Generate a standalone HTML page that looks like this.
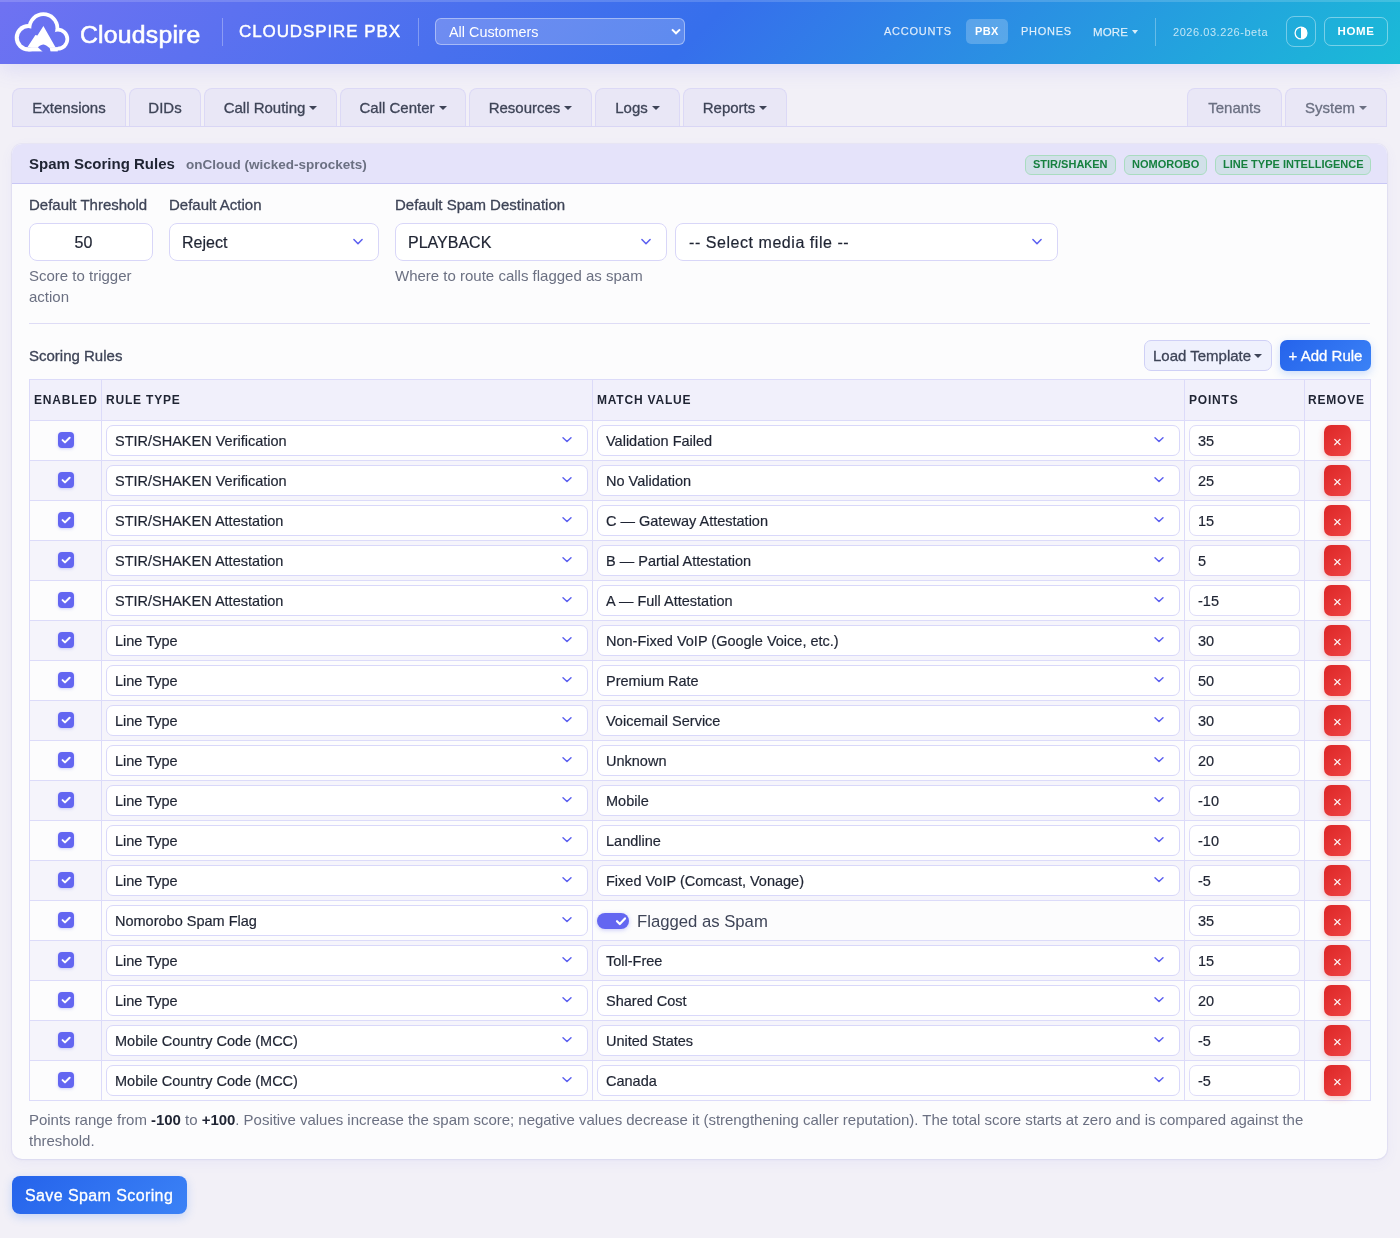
<!DOCTYPE html>
<html><head><meta charset="utf-8">
<style>
*{box-sizing:border-box;margin:0;padding:0}
html,body{width:1400px;height:1238px;overflow:hidden}
body{will-change:transform;background:#f2f0f7;font-family:"Liberation Sans",sans-serif;color:#1f2433;position:relative}
.hdr{position:absolute;left:0;top:0;width:1400px;height:64px;background:linear-gradient(135deg,#6f72f2 0%,#366fec 50%,#1abbd7 100%);box-shadow:0 5px 20px rgba(99,102,241,.15)}
.hdr::before{content:"";position:absolute;left:0;top:0;right:0;height:2px;background:rgba(255,255,255,.16)}
.ab{position:absolute;white-space:nowrap}
.brand{left:80px;top:20.5px;font-size:24.8px;font-weight:400;color:#fff;line-height:28px;-webkit-text-stroke:.55px #fff;letter-spacing:.2px}
.vsep{width:1px;background:rgba(255,255,255,.3)}
.pbx{left:239px;top:22px;font-size:17px;font-weight:400;color:#fff;letter-spacing:.9px;line-height:20px;-webkit-text-stroke:.45px #fff}
.cust{left:435px;top:18px;width:250px;height:27px;border:1px solid rgba(255,255,255,.4);border-radius:6px;background:rgba(255,255,255,.2);color:#fff;font-size:14.4px;line-height:27px;padding-left:13px}
.nav{font-size:11px;color:rgba(255,255,255,.82);letter-spacing:.75px;line-height:14px;-webkit-text-stroke:.25px rgba(255,255,255,.6)}
.tabs .tab{position:absolute;top:88px;height:38px;border:1px solid #dcd9f6;border-bottom:none;border-radius:8px 8px 0 0;background:#e9e7f6;font-size:15px;color:#3e4457;line-height:37px;text-align:center;white-space:nowrap;-webkit-text-stroke:.3px currentColor}
.caret{display:inline-block;width:0;height:0;border-left:4px solid transparent;border-right:4px solid transparent;border-top:4px solid currentColor;vertical-align:middle;margin-left:4px;position:relative;top:-1px}
.card{position:absolute;left:12px;top:144px;width:1375px;height:1015px;background:#fcfcfd;border-radius:10px;box-shadow:0 0 0 1px rgba(120,110,230,.07),0 1px 3px rgba(60,60,120,.05),0 4px 14px rgba(99,102,241,.06);overflow:hidden}
.chd{position:absolute;left:0;top:0;width:100%;height:40px;background:#e5e3fa;border-bottom:1px solid #c9c7f5}
.badge{position:absolute;top:11px;height:20px;border:1px solid #a9dcc0;border-radius:6px;background:#d1e0e9;color:#16803f;font-size:11px;font-weight:700;line-height:17px;padding:0 7px;white-space:nowrap}
.lbl{font-size:15px;color:#3e4457;line-height:18px;-webkit-text-stroke:.3px #3e4457}
.inp{position:absolute;height:38px;border:1px solid #d8d6f8;border-radius:8px;background:#fff;font-size:16px;color:#1f2433;line-height:38px;white-space:nowrap;-webkit-text-stroke:.2px #1f2433}
.help{font-size:15px;color:#6b7082;line-height:21px}
.chev{position:absolute;width:10px;height:6px}

.sr{left:17px;top:203px;font-size:15px;color:#3e4457;line-height:18px;-webkit-text-stroke:.3px #3e4457}
.btnlt{position:absolute;left:1132px;top:196px;width:128px;height:31px;border:1px solid #cfd0f6;border-radius:7px;background:#eff1fd;color:#3e4457;font-size:15px;line-height:29px;padding-left:8px;white-space:nowrap;-webkit-text-stroke:.3px #3e4457}
.btnar{position:absolute;left:1268px;top:196px;width:91px;height:31px;border-radius:7px;background:linear-gradient(135deg,#2563eb,#3b82f6);color:#fff;font-size:15px;line-height:31px;text-align:center;white-space:nowrap;box-shadow:0 3px 8px rgba(59,130,246,.25);-webkit-text-stroke:.3px #fff}
.tbl{position:absolute;left:17px;top:235px;width:1342px;height:722px;border:1px solid #dcdbf9;background:#fcfcfd}
.th{position:absolute;left:0;top:0;width:100%;height:41px;background:#f1f0fb;border-bottom:1px solid #dcdbf9}
.th div{position:absolute;top:12px;font-size:12px;font-weight:700;color:#1f2433;letter-spacing:.8px;line-height:16px}
.vl{position:absolute;top:0;bottom:0;width:1px;background:#dcdbf9}
.rows{position:absolute;left:0;top:41px;width:100%}
.tr{position:relative;height:40px;border-bottom:1px solid #dcdbf9}
.tr.even{background:#f5f4fb}
.tr:last-child{border-bottom:none}
.c{position:absolute;top:0;height:39px}
.cb{position:absolute;left:28px;top:11px;width:16px;height:16px;border-radius:4px;background:#6366f1;box-shadow:0 1px 3px rgba(99,102,241,.3)}
.cb svg{position:absolute;left:3px;top:4px}
.sel{position:absolute;top:4px;height:31px;border:1px solid #d9d8fa;border-radius:7px;background:#fff;font-size:14.5px;color:#1f2433;line-height:30px;padding-left:8px;white-space:nowrap;-webkit-text-stroke:.2px #1f2433}
.c2 .sel{left:4px;width:482px}
.c3 .sel{left:4px;width:583px}
.ch{position:absolute;right:14px;top:9px}
.pts{position:absolute;left:4px;top:4px;width:111px;height:31px;border:1px solid #dedcf9;border-radius:7px;background:#fff;font-size:14.5px;color:#1f2433;line-height:30px;padding-left:8px;-webkit-text-stroke:.2px #1f2433}
.rm{position:absolute;left:19px;top:4px;width:27px;height:31px;border-radius:7px;background:linear-gradient(135deg,#dc2626,#ef4444);color:#fff;font-size:15px;font-weight:400;line-height:34px;text-align:center;box-shadow:0 2px 6px rgba(220,38,38,.28)}
.c1{left:0;width:71px}.c2{left:72px;width:490px}.c3{left:563px;width:591px}.c4{left:1155px;width:119px}.c5{left:1275px;width:65px}
.tog{position:absolute;left:4px;top:12px;width:32px;height:16px;border-radius:8px;background:#6366f1;box-shadow:0 1px 4px rgba(99,102,241,.35)}
.tog svg{position:absolute;left:18px;top:3px}
.togl{position:absolute;left:44px;top:11px;font-size:16.7px;color:#3e4457;line-height:20px;white-space:nowrap}
.foot{left:17px;top:965px;font-size:15px;letter-spacing:-.03px;color:#6b7082;line-height:21px;white-space:normal;width:1330px}
.foot b{color:#1f2433}
.save{position:absolute;left:12px;top:1176px;width:175px;height:38px;border-radius:8px;background:linear-gradient(135deg,#2563eb,#3b82f6);color:#fff;font-size:16px;letter-spacing:.4px;line-height:40px;-webkit-text-stroke:.3px #fff;padding-left:13px;white-space:nowrap;box-shadow:0 3px 10px rgba(59,130,246,.25)}

.ch2{position:absolute;right:14px;top:13px}
</style></head><body>
<div class="hdr">
  <svg class="ab" style="left:10px;top:8px" width="64" height="48" viewBox="0 0 64 48">
    <defs><mask id="cm">
      <g fill="#fff">
        <circle cx="18.4" cy="29.7" r="13.7"/><circle cx="33.4" cy="20.2" r="15.9"/><circle cx="47.8" cy="31.1" r="11.4"/><rect x="18.4" y="29" width="29.4" height="14.4"/>
      </g>
      <g fill="#000">
        <circle cx="18.4" cy="29.7" r="9.6"/><circle cx="33.4" cy="20.2" r="12.1"/><circle cx="47.8" cy="31.1" r="7.7"/><rect x="18.4" y="25" width="29.4" height="14.1"/>
      </g>
      <polygon fill="#fff" points="17.4,39.3 25.4,27 27.4,27.6 33.4,18.1 45.5,39.3"/>
      <path fill="#000" d="M27.9,39.3 C30,37.6 32,36.5 33.6,36.6 C35.5,36.8 37.8,38.8 39.8,40.2 L41.5,48 L33,48 L32.5,43.6 Z"/>
    </mask></defs>
    <rect width="64" height="48" fill="#fff" mask="url(#cm)"/>
  </svg>
  <div class="ab brand">Cloudspire</div>
  <div class="ab vsep" style="left:222px;top:18px;height:28px"></div>
  <div class="ab pbx">CLOUDSPIRE PBX</div>
  <div class="ab vsep" style="left:418px;top:18px;height:28px"></div>
  <div class="ab cust">All Customers
    <svg class="ab" style="left:235px;top:8.5px" width="10" height="7" viewBox="0 0 10 7"><path d="M1 1.4 L5 5.3 L9 1.4" fill="none" stroke="#fff" stroke-width="2"/></svg>
  </div>
  <div class="ab nav" style="left:884px;top:24px">ACCOUNTS</div>
  <div class="ab" style="left:966px;top:19px;width:42px;height:25px;border-radius:5px;background:rgba(255,255,255,.22)"></div>
  <div class="ab nav" style="left:975px;top:24px;color:#fff;font-weight:700;letter-spacing:.4px;-webkit-text-stroke:0">PBX</div>
  <div class="ab nav" style="left:1021px;top:24px">PHONES</div>
  <div class="ab nav" style="left:1093px;top:25px;font-size:11.5px;letter-spacing:.1px">MORE<span class="caret" style="border-width:4px 3.5px 0 3.5px;margin-left:4px"></span></div>
  <div class="ab vsep" style="left:1155px;top:18px;height:28px"></div>
  <div class="ab nav" style="left:1173px;top:25px;color:rgba(255,255,255,.72);letter-spacing:.55px;-webkit-text-stroke:0">2026.03.226-beta</div>
  <div class="ab" style="left:1286px;top:16px;width:30px;height:31px;border:1px solid rgba(255,255,255,.38);border-radius:8px"></div>
  <svg class="ab" style="left:1293px;top:25px" width="16" height="16" viewBox="0 0 16 16"><circle cx="8" cy="8" r="5.9" fill="none" stroke="#fff" stroke-width="1.3"/><path d="M8 2.1 A5.9 5.9 0 0 1 8 13.9 Z" fill="#fff"/></svg>
  <div class="ab" style="left:1324px;top:17px;width:64px;height:29px;border:1px solid rgba(255,255,255,.4);border-radius:7px;color:#fff;font-size:11.5px;font-weight:700;letter-spacing:.6px;line-height:27px;text-align:center">HOME</div>
</div>

<div class="tabs">
  <div class="tab" style="left:12px;width:114px">Extensions</div>
  <div class="tab" style="left:129px;width:72px">DIDs</div>
  <div class="tab" style="left:204px;width:133px">Call Routing<span class="caret"></span></div>
  <div class="tab" style="left:340px;width:126px">Call Center<span class="caret"></span></div>
  <div class="tab" style="left:469px;width:123px">Resources<span class="caret"></span></div>
  <div class="tab" style="left:595px;width:85px">Logs<span class="caret"></span></div>
  <div class="tab" style="left:683px;width:104px">Reports<span class="caret"></span></div>
  <div class="tab" style="left:1187px;width:95px;color:#6b7082">Tenants</div>
  <div class="tab" style="left:1285px;width:102px;color:#6b7082">System<span class="caret"></span></div>
  <div class="ab" style="left:12px;top:126px;width:1375px;height:1px;background:#d9d6f5"></div>
</div>

<div class="card" id="card">
  <div class="chd">
    <div class="ab" style="left:17px;top:11px;font-size:15px;font-weight:700;color:#1f2433;line-height:18px">Spam Scoring Rules</div>
    <div class="ab" style="left:174px;top:12px;font-size:13.5px;font-weight:700;color:#6b7082;line-height:17px">onCloud (wicked-sprockets)</div>
    <div class="badge" style="left:1013px;width:91px">STIR/SHAKEN</div>
    <div class="badge" style="left:1112px;width:83px">NOMOROBO</div>
    <div class="badge" style="left:1203px;width:156px">LINE TYPE INTELLIGENCE</div>
  </div>
  <!-- form -->
  <div class="ab lbl" style="left:17px;top:52px">Default Threshold</div>
  <div class="ab lbl" style="left:157px;top:52px">Default Action</div>
  <div class="ab lbl" style="left:383px;top:52px">Default Spam Destination</div>
  <div class="inp" style="left:17px;top:79px;width:124px;text-align:center;padding-right:15px">50</div>
  <div class="inp" style="left:157px;top:79px;width:210px;padding-left:12px">Reject<svg class="ch2" width="12" height="8" viewBox="0 0 12 8"><path d="M1.9 2.5 L6 6.8 L10.1 2.5" fill="none" stroke="#5b5ff0" stroke-width="1.5" stroke-linecap="round" stroke-linejoin="round"/></svg></div>
  <div class="inp" style="left:383px;top:79px;width:272px;padding-left:12px">PLAYBACK<svg class="ch2" width="12" height="8" viewBox="0 0 12 8"><path d="M1.9 2.5 L6 6.8 L10.1 2.5" fill="none" stroke="#5b5ff0" stroke-width="1.5" stroke-linecap="round" stroke-linejoin="round"/></svg></div>
  <div class="inp" style="left:663px;top:79px;width:383px;padding-left:13px;letter-spacing:.55px">-- Select media file --<svg class="ch2" width="12" height="8" viewBox="0 0 12 8"><path d="M1.9 2.5 L6 6.8 L10.1 2.5" fill="none" stroke="#5b5ff0" stroke-width="1.5" stroke-linecap="round" stroke-linejoin="round"/></svg></div>
  <div class="ab help" style="left:17px;top:121px">Score to trigger<br>action</div>
  <div class="ab help" style="left:383px;top:121px">Where to route calls flagged as spam</div>
  <div class="ab" style="left:17px;top:179px;width:1341px;height:1px;background:#dedcf6"></div>
  <div class="ab sr">Scoring Rules</div>
  <div class="btnlt">Load Template<span class="caret" style="margin-left:3px;-webkit-text-stroke:0"></span></div>
  <div class="btnar">+ Add Rule</div>
  <div class="tbl">
    <div class="th"><div style="left:4px">ENABLED</div><div style="left:76px">RULE TYPE</div><div style="left:567px">MATCH VALUE</div><div style="left:1159px">POINTS</div><div style="left:1278px">REMOVE</div></div>
    <div class="rows">
<div class="tr"><div class="c c1"><div class="cb"><svg width="10" height="8" viewBox="0 0 10 8"><path d="M1.6 4.1 L4 6.4 L8.6 1.8" fill="none" stroke="#fff" stroke-width="2" stroke-linecap="round" stroke-linejoin="round"/></svg></div></div><div class="c c2"><div class="sel">STIR/SHAKEN Verification<svg class="ch" width="12" height="8" viewBox="0 0 12 8"><path d="M2 2.7 L6 6.6 L10 2.7" fill="none" stroke="#5b5ff0" stroke-width="1.45" stroke-linecap="round" stroke-linejoin="round"/></svg></div></div><div class="c c3"><div class="sel">Validation Failed<svg class="ch" width="12" height="8" viewBox="0 0 12 8"><path d="M2 2.7 L6 6.6 L10 2.7" fill="none" stroke="#5b5ff0" stroke-width="1.45" stroke-linecap="round" stroke-linejoin="round"/></svg></div></div><div class="c c4"><div class="pts">35</div></div><div class="c c5"><div class="rm">&times;</div></div></div>
<div class="tr even"><div class="c c1"><div class="cb"><svg width="10" height="8" viewBox="0 0 10 8"><path d="M1.6 4.1 L4 6.4 L8.6 1.8" fill="none" stroke="#fff" stroke-width="2" stroke-linecap="round" stroke-linejoin="round"/></svg></div></div><div class="c c2"><div class="sel">STIR/SHAKEN Verification<svg class="ch" width="12" height="8" viewBox="0 0 12 8"><path d="M2 2.7 L6 6.6 L10 2.7" fill="none" stroke="#5b5ff0" stroke-width="1.45" stroke-linecap="round" stroke-linejoin="round"/></svg></div></div><div class="c c3"><div class="sel">No Validation<svg class="ch" width="12" height="8" viewBox="0 0 12 8"><path d="M2 2.7 L6 6.6 L10 2.7" fill="none" stroke="#5b5ff0" stroke-width="1.45" stroke-linecap="round" stroke-linejoin="round"/></svg></div></div><div class="c c4"><div class="pts">25</div></div><div class="c c5"><div class="rm">&times;</div></div></div>
<div class="tr"><div class="c c1"><div class="cb"><svg width="10" height="8" viewBox="0 0 10 8"><path d="M1.6 4.1 L4 6.4 L8.6 1.8" fill="none" stroke="#fff" stroke-width="2" stroke-linecap="round" stroke-linejoin="round"/></svg></div></div><div class="c c2"><div class="sel">STIR/SHAKEN Attestation<svg class="ch" width="12" height="8" viewBox="0 0 12 8"><path d="M2 2.7 L6 6.6 L10 2.7" fill="none" stroke="#5b5ff0" stroke-width="1.45" stroke-linecap="round" stroke-linejoin="round"/></svg></div></div><div class="c c3"><div class="sel">C — Gateway Attestation<svg class="ch" width="12" height="8" viewBox="0 0 12 8"><path d="M2 2.7 L6 6.6 L10 2.7" fill="none" stroke="#5b5ff0" stroke-width="1.45" stroke-linecap="round" stroke-linejoin="round"/></svg></div></div><div class="c c4"><div class="pts">15</div></div><div class="c c5"><div class="rm">&times;</div></div></div>
<div class="tr even"><div class="c c1"><div class="cb"><svg width="10" height="8" viewBox="0 0 10 8"><path d="M1.6 4.1 L4 6.4 L8.6 1.8" fill="none" stroke="#fff" stroke-width="2" stroke-linecap="round" stroke-linejoin="round"/></svg></div></div><div class="c c2"><div class="sel">STIR/SHAKEN Attestation<svg class="ch" width="12" height="8" viewBox="0 0 12 8"><path d="M2 2.7 L6 6.6 L10 2.7" fill="none" stroke="#5b5ff0" stroke-width="1.45" stroke-linecap="round" stroke-linejoin="round"/></svg></div></div><div class="c c3"><div class="sel">B — Partial Attestation<svg class="ch" width="12" height="8" viewBox="0 0 12 8"><path d="M2 2.7 L6 6.6 L10 2.7" fill="none" stroke="#5b5ff0" stroke-width="1.45" stroke-linecap="round" stroke-linejoin="round"/></svg></div></div><div class="c c4"><div class="pts">5</div></div><div class="c c5"><div class="rm">&times;</div></div></div>
<div class="tr"><div class="c c1"><div class="cb"><svg width="10" height="8" viewBox="0 0 10 8"><path d="M1.6 4.1 L4 6.4 L8.6 1.8" fill="none" stroke="#fff" stroke-width="2" stroke-linecap="round" stroke-linejoin="round"/></svg></div></div><div class="c c2"><div class="sel">STIR/SHAKEN Attestation<svg class="ch" width="12" height="8" viewBox="0 0 12 8"><path d="M2 2.7 L6 6.6 L10 2.7" fill="none" stroke="#5b5ff0" stroke-width="1.45" stroke-linecap="round" stroke-linejoin="round"/></svg></div></div><div class="c c3"><div class="sel">A — Full Attestation<svg class="ch" width="12" height="8" viewBox="0 0 12 8"><path d="M2 2.7 L6 6.6 L10 2.7" fill="none" stroke="#5b5ff0" stroke-width="1.45" stroke-linecap="round" stroke-linejoin="round"/></svg></div></div><div class="c c4"><div class="pts">-15</div></div><div class="c c5"><div class="rm">&times;</div></div></div>
<div class="tr even"><div class="c c1"><div class="cb"><svg width="10" height="8" viewBox="0 0 10 8"><path d="M1.6 4.1 L4 6.4 L8.6 1.8" fill="none" stroke="#fff" stroke-width="2" stroke-linecap="round" stroke-linejoin="round"/></svg></div></div><div class="c c2"><div class="sel">Line Type<svg class="ch" width="12" height="8" viewBox="0 0 12 8"><path d="M2 2.7 L6 6.6 L10 2.7" fill="none" stroke="#5b5ff0" stroke-width="1.45" stroke-linecap="round" stroke-linejoin="round"/></svg></div></div><div class="c c3"><div class="sel">Non-Fixed VoIP (Google Voice, etc.)<svg class="ch" width="12" height="8" viewBox="0 0 12 8"><path d="M2 2.7 L6 6.6 L10 2.7" fill="none" stroke="#5b5ff0" stroke-width="1.45" stroke-linecap="round" stroke-linejoin="round"/></svg></div></div><div class="c c4"><div class="pts">30</div></div><div class="c c5"><div class="rm">&times;</div></div></div>
<div class="tr"><div class="c c1"><div class="cb"><svg width="10" height="8" viewBox="0 0 10 8"><path d="M1.6 4.1 L4 6.4 L8.6 1.8" fill="none" stroke="#fff" stroke-width="2" stroke-linecap="round" stroke-linejoin="round"/></svg></div></div><div class="c c2"><div class="sel">Line Type<svg class="ch" width="12" height="8" viewBox="0 0 12 8"><path d="M2 2.7 L6 6.6 L10 2.7" fill="none" stroke="#5b5ff0" stroke-width="1.45" stroke-linecap="round" stroke-linejoin="round"/></svg></div></div><div class="c c3"><div class="sel">Premium Rate<svg class="ch" width="12" height="8" viewBox="0 0 12 8"><path d="M2 2.7 L6 6.6 L10 2.7" fill="none" stroke="#5b5ff0" stroke-width="1.45" stroke-linecap="round" stroke-linejoin="round"/></svg></div></div><div class="c c4"><div class="pts">50</div></div><div class="c c5"><div class="rm">&times;</div></div></div>
<div class="tr even"><div class="c c1"><div class="cb"><svg width="10" height="8" viewBox="0 0 10 8"><path d="M1.6 4.1 L4 6.4 L8.6 1.8" fill="none" stroke="#fff" stroke-width="2" stroke-linecap="round" stroke-linejoin="round"/></svg></div></div><div class="c c2"><div class="sel">Line Type<svg class="ch" width="12" height="8" viewBox="0 0 12 8"><path d="M2 2.7 L6 6.6 L10 2.7" fill="none" stroke="#5b5ff0" stroke-width="1.45" stroke-linecap="round" stroke-linejoin="round"/></svg></div></div><div class="c c3"><div class="sel">Voicemail Service<svg class="ch" width="12" height="8" viewBox="0 0 12 8"><path d="M2 2.7 L6 6.6 L10 2.7" fill="none" stroke="#5b5ff0" stroke-width="1.45" stroke-linecap="round" stroke-linejoin="round"/></svg></div></div><div class="c c4"><div class="pts">30</div></div><div class="c c5"><div class="rm">&times;</div></div></div>
<div class="tr"><div class="c c1"><div class="cb"><svg width="10" height="8" viewBox="0 0 10 8"><path d="M1.6 4.1 L4 6.4 L8.6 1.8" fill="none" stroke="#fff" stroke-width="2" stroke-linecap="round" stroke-linejoin="round"/></svg></div></div><div class="c c2"><div class="sel">Line Type<svg class="ch" width="12" height="8" viewBox="0 0 12 8"><path d="M2 2.7 L6 6.6 L10 2.7" fill="none" stroke="#5b5ff0" stroke-width="1.45" stroke-linecap="round" stroke-linejoin="round"/></svg></div></div><div class="c c3"><div class="sel">Unknown<svg class="ch" width="12" height="8" viewBox="0 0 12 8"><path d="M2 2.7 L6 6.6 L10 2.7" fill="none" stroke="#5b5ff0" stroke-width="1.45" stroke-linecap="round" stroke-linejoin="round"/></svg></div></div><div class="c c4"><div class="pts">20</div></div><div class="c c5"><div class="rm">&times;</div></div></div>
<div class="tr even"><div class="c c1"><div class="cb"><svg width="10" height="8" viewBox="0 0 10 8"><path d="M1.6 4.1 L4 6.4 L8.6 1.8" fill="none" stroke="#fff" stroke-width="2" stroke-linecap="round" stroke-linejoin="round"/></svg></div></div><div class="c c2"><div class="sel">Line Type<svg class="ch" width="12" height="8" viewBox="0 0 12 8"><path d="M2 2.7 L6 6.6 L10 2.7" fill="none" stroke="#5b5ff0" stroke-width="1.45" stroke-linecap="round" stroke-linejoin="round"/></svg></div></div><div class="c c3"><div class="sel">Mobile<svg class="ch" width="12" height="8" viewBox="0 0 12 8"><path d="M2 2.7 L6 6.6 L10 2.7" fill="none" stroke="#5b5ff0" stroke-width="1.45" stroke-linecap="round" stroke-linejoin="round"/></svg></div></div><div class="c c4"><div class="pts">-10</div></div><div class="c c5"><div class="rm">&times;</div></div></div>
<div class="tr"><div class="c c1"><div class="cb"><svg width="10" height="8" viewBox="0 0 10 8"><path d="M1.6 4.1 L4 6.4 L8.6 1.8" fill="none" stroke="#fff" stroke-width="2" stroke-linecap="round" stroke-linejoin="round"/></svg></div></div><div class="c c2"><div class="sel">Line Type<svg class="ch" width="12" height="8" viewBox="0 0 12 8"><path d="M2 2.7 L6 6.6 L10 2.7" fill="none" stroke="#5b5ff0" stroke-width="1.45" stroke-linecap="round" stroke-linejoin="round"/></svg></div></div><div class="c c3"><div class="sel">Landline<svg class="ch" width="12" height="8" viewBox="0 0 12 8"><path d="M2 2.7 L6 6.6 L10 2.7" fill="none" stroke="#5b5ff0" stroke-width="1.45" stroke-linecap="round" stroke-linejoin="round"/></svg></div></div><div class="c c4"><div class="pts">-10</div></div><div class="c c5"><div class="rm">&times;</div></div></div>
<div class="tr even"><div class="c c1"><div class="cb"><svg width="10" height="8" viewBox="0 0 10 8"><path d="M1.6 4.1 L4 6.4 L8.6 1.8" fill="none" stroke="#fff" stroke-width="2" stroke-linecap="round" stroke-linejoin="round"/></svg></div></div><div class="c c2"><div class="sel">Line Type<svg class="ch" width="12" height="8" viewBox="0 0 12 8"><path d="M2 2.7 L6 6.6 L10 2.7" fill="none" stroke="#5b5ff0" stroke-width="1.45" stroke-linecap="round" stroke-linejoin="round"/></svg></div></div><div class="c c3"><div class="sel">Fixed VoIP (Comcast, Vonage)<svg class="ch" width="12" height="8" viewBox="0 0 12 8"><path d="M2 2.7 L6 6.6 L10 2.7" fill="none" stroke="#5b5ff0" stroke-width="1.45" stroke-linecap="round" stroke-linejoin="round"/></svg></div></div><div class="c c4"><div class="pts">-5</div></div><div class="c c5"><div class="rm">&times;</div></div></div>
<div class="tr"><div class="c c1"><div class="cb"><svg width="10" height="8" viewBox="0 0 10 8"><path d="M1.6 4.1 L4 6.4 L8.6 1.8" fill="none" stroke="#fff" stroke-width="2" stroke-linecap="round" stroke-linejoin="round"/></svg></div></div><div class="c c2"><div class="sel">Nomorobo Spam Flag<svg class="ch" width="12" height="8" viewBox="0 0 12 8"><path d="M2 2.7 L6 6.6 L10 2.7" fill="none" stroke="#5b5ff0" stroke-width="1.45" stroke-linecap="round" stroke-linejoin="round"/></svg></div></div><div class="c c3"><div class="tog"><svg width="12" height="10" viewBox="0 0 12 10"><path d="M2 5.2 L4.8 8 L10 2.4" fill="none" stroke="#fff" stroke-width="2.2" stroke-linecap="round" stroke-linejoin="round"/></svg></div><span class="togl">Flagged as Spam</span></div><div class="c c4"><div class="pts">35</div></div><div class="c c5"><div class="rm">&times;</div></div></div>
<div class="tr even"><div class="c c1"><div class="cb"><svg width="10" height="8" viewBox="0 0 10 8"><path d="M1.6 4.1 L4 6.4 L8.6 1.8" fill="none" stroke="#fff" stroke-width="2" stroke-linecap="round" stroke-linejoin="round"/></svg></div></div><div class="c c2"><div class="sel">Line Type<svg class="ch" width="12" height="8" viewBox="0 0 12 8"><path d="M2 2.7 L6 6.6 L10 2.7" fill="none" stroke="#5b5ff0" stroke-width="1.45" stroke-linecap="round" stroke-linejoin="round"/></svg></div></div><div class="c c3"><div class="sel">Toll-Free<svg class="ch" width="12" height="8" viewBox="0 0 12 8"><path d="M2 2.7 L6 6.6 L10 2.7" fill="none" stroke="#5b5ff0" stroke-width="1.45" stroke-linecap="round" stroke-linejoin="round"/></svg></div></div><div class="c c4"><div class="pts">15</div></div><div class="c c5"><div class="rm">&times;</div></div></div>
<div class="tr"><div class="c c1"><div class="cb"><svg width="10" height="8" viewBox="0 0 10 8"><path d="M1.6 4.1 L4 6.4 L8.6 1.8" fill="none" stroke="#fff" stroke-width="2" stroke-linecap="round" stroke-linejoin="round"/></svg></div></div><div class="c c2"><div class="sel">Line Type<svg class="ch" width="12" height="8" viewBox="0 0 12 8"><path d="M2 2.7 L6 6.6 L10 2.7" fill="none" stroke="#5b5ff0" stroke-width="1.45" stroke-linecap="round" stroke-linejoin="round"/></svg></div></div><div class="c c3"><div class="sel">Shared Cost<svg class="ch" width="12" height="8" viewBox="0 0 12 8"><path d="M2 2.7 L6 6.6 L10 2.7" fill="none" stroke="#5b5ff0" stroke-width="1.45" stroke-linecap="round" stroke-linejoin="round"/></svg></div></div><div class="c c4"><div class="pts">20</div></div><div class="c c5"><div class="rm">&times;</div></div></div>
<div class="tr even"><div class="c c1"><div class="cb"><svg width="10" height="8" viewBox="0 0 10 8"><path d="M1.6 4.1 L4 6.4 L8.6 1.8" fill="none" stroke="#fff" stroke-width="2" stroke-linecap="round" stroke-linejoin="round"/></svg></div></div><div class="c c2"><div class="sel">Mobile Country Code (MCC)<svg class="ch" width="12" height="8" viewBox="0 0 12 8"><path d="M2 2.7 L6 6.6 L10 2.7" fill="none" stroke="#5b5ff0" stroke-width="1.45" stroke-linecap="round" stroke-linejoin="round"/></svg></div></div><div class="c c3"><div class="sel">United States<svg class="ch" width="12" height="8" viewBox="0 0 12 8"><path d="M2 2.7 L6 6.6 L10 2.7" fill="none" stroke="#5b5ff0" stroke-width="1.45" stroke-linecap="round" stroke-linejoin="round"/></svg></div></div><div class="c c4"><div class="pts">-5</div></div><div class="c c5"><div class="rm">&times;</div></div></div>
<div class="tr"><div class="c c1"><div class="cb"><svg width="10" height="8" viewBox="0 0 10 8"><path d="M1.6 4.1 L4 6.4 L8.6 1.8" fill="none" stroke="#fff" stroke-width="2" stroke-linecap="round" stroke-linejoin="round"/></svg></div></div><div class="c c2"><div class="sel">Mobile Country Code (MCC)<svg class="ch" width="12" height="8" viewBox="0 0 12 8"><path d="M2 2.7 L6 6.6 L10 2.7" fill="none" stroke="#5b5ff0" stroke-width="1.45" stroke-linecap="round" stroke-linejoin="round"/></svg></div></div><div class="c c3"><div class="sel">Canada<svg class="ch" width="12" height="8" viewBox="0 0 12 8"><path d="M2 2.7 L6 6.6 L10 2.7" fill="none" stroke="#5b5ff0" stroke-width="1.45" stroke-linecap="round" stroke-linejoin="round"/></svg></div></div><div class="c c4"><div class="pts">-5</div></div><div class="c c5"><div class="rm">&times;</div></div></div>
    </div>
    <div class="vl" style="left:71px"></div><div class="vl" style="left:562px"></div><div class="vl" style="left:1154px"></div><div class="vl" style="left:1274px"></div>
  </div>
  <div class="ab foot">Points range from <b>-100</b> to <b>+100</b>. Positive values increase the spam score; negative values decrease it (strengthening caller reputation). The total score starts at zero and is compared against the threshold.</div>
</div>
<div class="save">Save Spam Scoring</div>
</body></html>
